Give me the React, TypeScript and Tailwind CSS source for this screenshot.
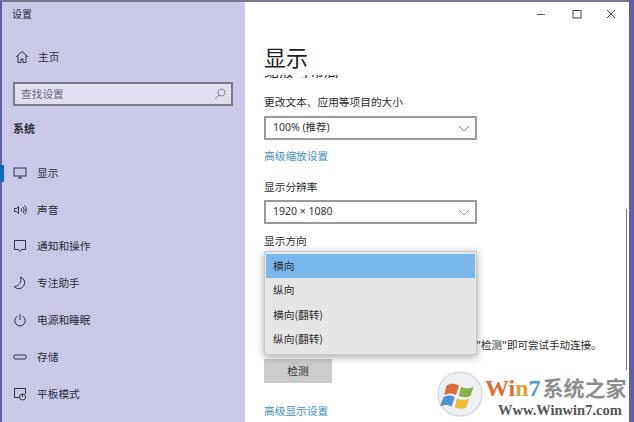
import React from "react";

const font = '"Noto Sans CJK SC", "Noto Sans", sans-serif';

function Ico({ children }: { children: React.ReactNode }) {
  return (
    <svg width="14" height="14" viewBox="0 0 14 14" fill="none" stroke="#33334a" strokeWidth="1" className="shrink-0">
      {children}
    </svg>
  );
}

const items: [string, React.ReactNode][] = [
  ["显示", <Ico key="a"><rect x="1" y="2" width="12" height="8" /><path d="M5 12h4M7 10v2" /></Ico>],
  ["声音", <Ico key="b"><path d="M1.5 5.5h2l2-2v7l-2-2h-2zM8 5.5a2 2 0 0 1 0 3M10 4a4.5 4.5 0 0 1 0 6M11.5 2.5a6.5 6.5 0 0 1 0 9" /></Ico>],
  ["通知和操作", <Ico key="c"><path d="M1.500 1.500h11v9h-4l-1.500 2-1.500-2h-4z" /></Ico>],
  ["专注助手", <Ico key="d"><path d="M7.500 1A6 6 0 1 1 1 10.500 A7 7 0 0 0 7.500 1z" /></Ico>],
  ["电源和睡眠", <Ico key="e"><path d="M4.500 3.200a5.200 5.200 0 1 0 5 0M7 1v6" /></Ico>],
  ["存储", <Ico key="f"><rect x="1" y="5" width="12" height="4" rx="1" /></Ico>],
  ["平板模式", <Ico key="g"><path d="M7 10.500H1.500v-9h11V7" /><circle cx="9.500" cy="10" r="3" /><path d="M9.500 7v3" /></Ico>],
];

function Select({ text }: { text: string }) {
  return (
    <div className="flex h-[24px] w-[213px] items-center justify-between border-2 border-[#9a9a9a] bg-white pl-[7px] pr-[5px] font-['Noto_Sans','Noto_Sans_CJK_SC',sans-serif] text-[10.500px] text-[#333]">
      <span>{text}</span>
      <svg width="12" height="7" viewBox="0 0 12 7" fill="none" stroke="#888" strokeWidth="0.900">
        <path d="M1 1l5 5 5-5" />
      </svg>
    </div>
  );
}

export default function App() {
  return (
    <div className="relative flex h-[422px] w-[634px] overflow-hidden bg-white" style={{ fontFamily: font }}>
      <aside className="flex w-[245px] shrink-0 flex-col border-l-2 border-t-2 border-l-[#5f5fa6] border-t-[#77778c] bg-[#c9c8e8] text-[#2c2c3c]">
        <div className="h-[24px] pl-[10px] pt-[2px] text-[10px] leading-[20px]">设置</div>
        <div className="mt-[19px] flex h-[24px] items-center gap-[9px] pl-[13px] text-[10.700px]">
          <svg width="14" height="14" viewBox="0 0 14 14" fill="none" stroke="#33334a" strokeWidth="1">
            <path d="M1 7l6-5.500L13 7M3 5.500v7h3V9h2v3.500h3v-7" />
          </svg>
          <span>主页</span>
        </div>
        <div className="ml-[11px] mt-[13px] flex h-[24px] w-[220px] items-center justify-between border-2 border-[#7b7b90] bg-[#dfdff0] pl-[6px] pr-[5px] text-[10.700px] text-[#67677a]">
          <span>查找设置</span>
          <svg width="12" height="12" viewBox="0 0 12 12" fill="none" stroke="#67677a" strokeWidth="0.800">
            <circle cx="7.500" cy="4.500" r="3.500" />
            <path d="M5 7l-4 4" />
          </svg>
        </div>
        <div className="mt-[12px] pl-[11px] text-[11px] font-bold leading-[20px]">系统</div>
        <nav className="mt-[16.500px] flex flex-col">
          {items.map(([label, icon], i) => (
            <div key={label} className="relative flex h-[36.800px] items-center gap-[10px] pl-[11px] text-[10.700px]">
              {i === 0 && <span className="absolute -left-[2px] top-[10px] h-[17px] w-[4px] bg-[#0d6cc0]" />}
              {icon}
              <span>{label}</span>
            </div>
          ))}
        </nav>
      </aside>

      <main className="flex min-w-0 flex-1 flex-col border-t-2 border-t-[#77778c] pl-[19px] text-[#2b2b2b]">
        <div className="flex h-[24px] items-center justify-end pr-[13px]">
          <svg width="10" height="10" viewBox="0 0 10 10" stroke="#555" fill="none"><path d="M1 5.500h8" /></svg>
          <svg width="10" height="10" viewBox="0 0 10 10" stroke="#444" fill="none" className="ml-[26px]"><rect x="1" y="1.500" width="8" height="7.500" /></svg>
          <svg width="10" height="10" viewBox="0 0 10 10" stroke="#444" fill="none" className="ml-[24px]"><path d="M1 1l8 8M9 1l-8 8" /></svg>
        </div>
        <h1 className="mt-[14px] text-[22px] leading-[32px] text-[#1c1c1c]">显示</h1>
        <div className="relative mt-[3px] h-[3px] overflow-hidden">
          <div className="absolute bottom-[-3px] left-0 text-[15px] leading-[20px]">缩放与布局</div>
        </div>
        <div className="mt-[16px] text-[10.700px] leading-[16px]">更改文本、应用等项目的大小</div>
        <div className="mt-[6px]"><Select text="100% (推荐)" /></div>
        <div className="mt-[8px] text-[10.700px] leading-[16px] text-[#3a8fc4]">高级缩放设置</div>
        <div className="mt-[15px] text-[10.700px] leading-[16px]">显示分辨率</div>
        <div className="mt-[5px]"><Select text="1920 × 1080" /></div>
        <div className="mt-[9px] text-[10.700px] leading-[16px]">显示方向</div>
        <div className="mt-[88px] pl-[212px] text-[10.500px] leading-[16px]">"检测"即可尝试手动连接。</div>
        <div className="mt-[6px] flex h-[24px] w-[68px] items-center justify-center bg-[#cccccc] text-[10.700px]">检测</div>
        <div className="mt-[20px] text-[10.700px] leading-[16px] text-[#3a8fc4]">高级显示设置</div>
      </main>

      <div className="w-[5px] shrink-0 bg-[#5f5fae]" />

      <div className="absolute left-[264px] top-[251px] flex h-[104px] w-[213px] flex-col border border-[#c8c8c8] bg-[#e6e6e6] pt-[2px] text-[10.700px] text-[#2b2b2b] shadow-[0_2px_8px_rgba(0,0,0,0.35)]">
        <div className="mx-[1px] flex h-[24px] items-center bg-[#7ab8ec] pl-[7px]">横向</div>
        <div className="flex h-[24.500px] items-center pl-[8px]">纵向</div>
        <div className="flex h-[24.500px] items-center pl-[8px]">横向(翻转)</div>
        <div className="flex h-[24.500px] items-center pl-[8px]">纵向(翻转)</div>
      </div>

      <div className="absolute left-[626px] top-[209px] h-[161px] w-[1px] bg-[#777]" />

      <div className="absolute left-[436px] top-[370px] h-[52px] w-[193px] overflow-hidden">
        <svg width="46" height="46" viewBox="0 0 44 44" className="absolute left-[1px] top-[1px]">
          <circle cx="22" cy="22" r="21" fill="#eef0f4" stroke="#c9ced8" />
          <path d="M9 14c5-3 9-2 12 0l-3 9c-3-2-7-2-11 0z" fill="#dd6a3a" />
          <path d="M23 15c3 2 8 2 12 0l-3 9c-4 2-8 1-11 0z" fill="#88b04b" />
          <path d="M6 25c4-2 8-2 11 0l-3 9c-3-2-7-2-11 0z" fill="#4f93d2" />
          <path d="M19 26c3 2 8 2 12 0l-3 9c-4 2-8 1-11 0z" fill="#f0bb3a" />
        </svg>
        <div className="absolute left-[49px] top-[2px] flex items-baseline whitespace-nowrap text-[24px] font-bold leading-[30px]" style={{ fontFamily: '"Liberation Serif", "Noto Sans CJK SC", serif' }}>
          <span className="text-[#d9703c]">Wi</span>
          <span className="text-[#e0a030]">n</span>
          <span className="text-[#4a9ad4]">7</span>
          <span className="ml-[2px] text-[21px] text-[#8d8d8d]" style={{ fontFamily: font }}>系统之家</span>
        </div>
        <div className="absolute left-[62px] top-[32px] whitespace-nowrap text-[14.500px] font-bold leading-[16px] text-[#555]" style={{ fontFamily: '"Liberation Serif", serif' }}>
          Www.Winwin7.com
        </div>
      </div>
    </div>
  );
}
